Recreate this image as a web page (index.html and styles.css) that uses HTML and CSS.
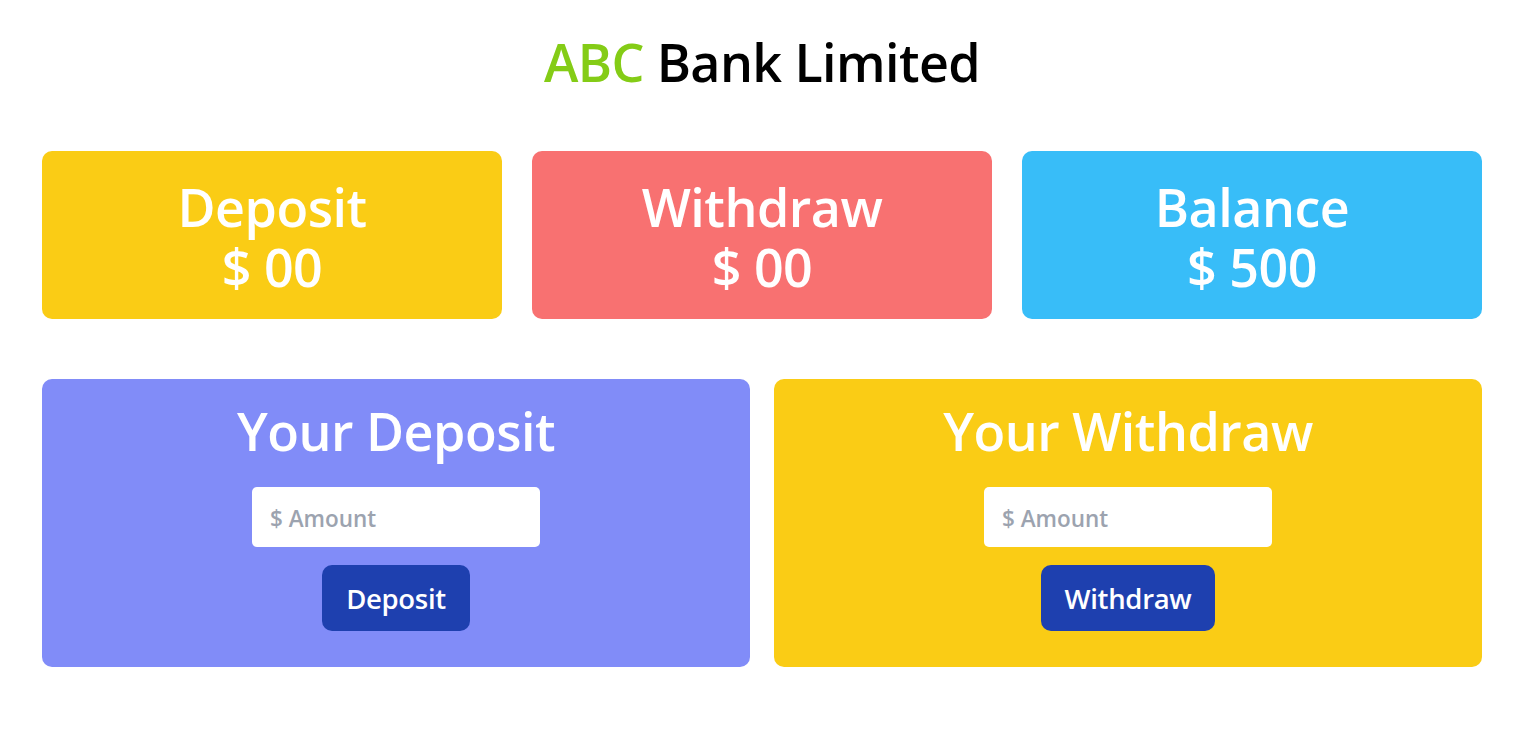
FILE: index.html
```html
<!DOCTYPE html>
<html lang="en">
<head>
<meta charset="utf-8">
<title>ABC Bank Limited</title>
<link rel="stylesheet" href="styles.css">
</head>
<body>
<main class="page">
  <h1 class="brand"><span class="brand-accent">ABC</span> Bank Limited</h1>

  <section class="stats">
    <div class="stat stat-deposit">
      <div class="stat-label">Deposit</div>
      <div class="stat-value">$ 00</div>
    </div>
    <div class="stat stat-withdraw">
      <div class="stat-label">Withdraw</div>
      <div class="stat-value">$ 00</div>
    </div>
    <div class="stat stat-balance">
      <div class="stat-label">Balance</div>
      <div class="stat-value">$ 500</div>
    </div>
  </section>

  <section class="actions">
    <div class="panel panel-deposit">
      <h2 class="panel-title">Your Deposit</h2>
      <input class="amount" type="text" placeholder="$ Amount">
      <button class="btn" type="button">Deposit</button>
    </div>
    <div class="panel panel-withdraw">
      <h2 class="panel-title">Your Withdraw</h2>
      <input class="amount" type="text" placeholder="$ Amount">
      <button class="btn" type="button">Withdraw</button>
    </div>
  </section>
</main>
</body>
</html>
```

FILE: styles.css
```css
* { box-sizing: border-box; }

html, body {
  margin: 0;
  padding: 0;
  background: #ffffff;
}

body {
  font-family: "Open Sans", "Noto Sans", sans-serif;
  color: #000;
}

.page {
  width: 1440px;
  margin: 0 0 0 42px;
  padding-top: 32px;
}

.brand {
  margin: 0;
  text-align: center;
  font-size: 52px;
  line-height: 60px;
  font-weight: 600;
  letter-spacing: -0.6px;
}

.brand-accent { color: #84cc16; }

.stats {
  margin-top: 59px;
  display: grid;
  grid-template-columns: repeat(3, 1fr);
  gap: 30px;
}

.stat {
  border-radius: 10px;
  padding: 26px 24px 22px;
  text-align: center;
  color: #fff;
  font-weight: 600;
  font-size: 52px;
  line-height: 60px;
  letter-spacing: -0.5px;
}

.stat-deposit { background: #facc15; }
.stat-withdraw { background: #f87171; }
.stat-balance { background: #38bdf8; }

.actions {
  margin-top: 60px;
  display: grid;
  grid-template-columns: 1fr 1fr;
  gap: 24px;
}

.panel {
  border-radius: 10px;
  padding: 22px 24px 36px;
  display: flex;
  flex-direction: column;
  align-items: center;
}

.panel-deposit { background: #818cf8; }
.panel-withdraw { background: #facc15; }

.panel-title {
  margin: 0 0 26px;
  color: #fff;
  font-size: 52px;
  line-height: 60px;
  font-weight: 600;
  letter-spacing: -0.5px;
}

.amount {
  width: 288px;
  height: 60px;
  border: 0;
  border-radius: 5px;
  padding: 3px 18px 0;
  font-family: inherit;
  font-size: 22.5px;
  font-weight: 600;
  color: #374151;
  outline: none;
  margin-bottom: 18px;
}

.amount::placeholder { color: #9ca3af; }

.btn {
  border: 0;
  border-radius: 10px;
  background: #1e40af;
  color: #fff;
  font-family: inherit;
  font-size: 27.5px;
  font-weight: 600;
  line-height: 36px;
  padding: 16px 24px 14px;
  letter-spacing: -0.3px;
  cursor: pointer;
}
```
